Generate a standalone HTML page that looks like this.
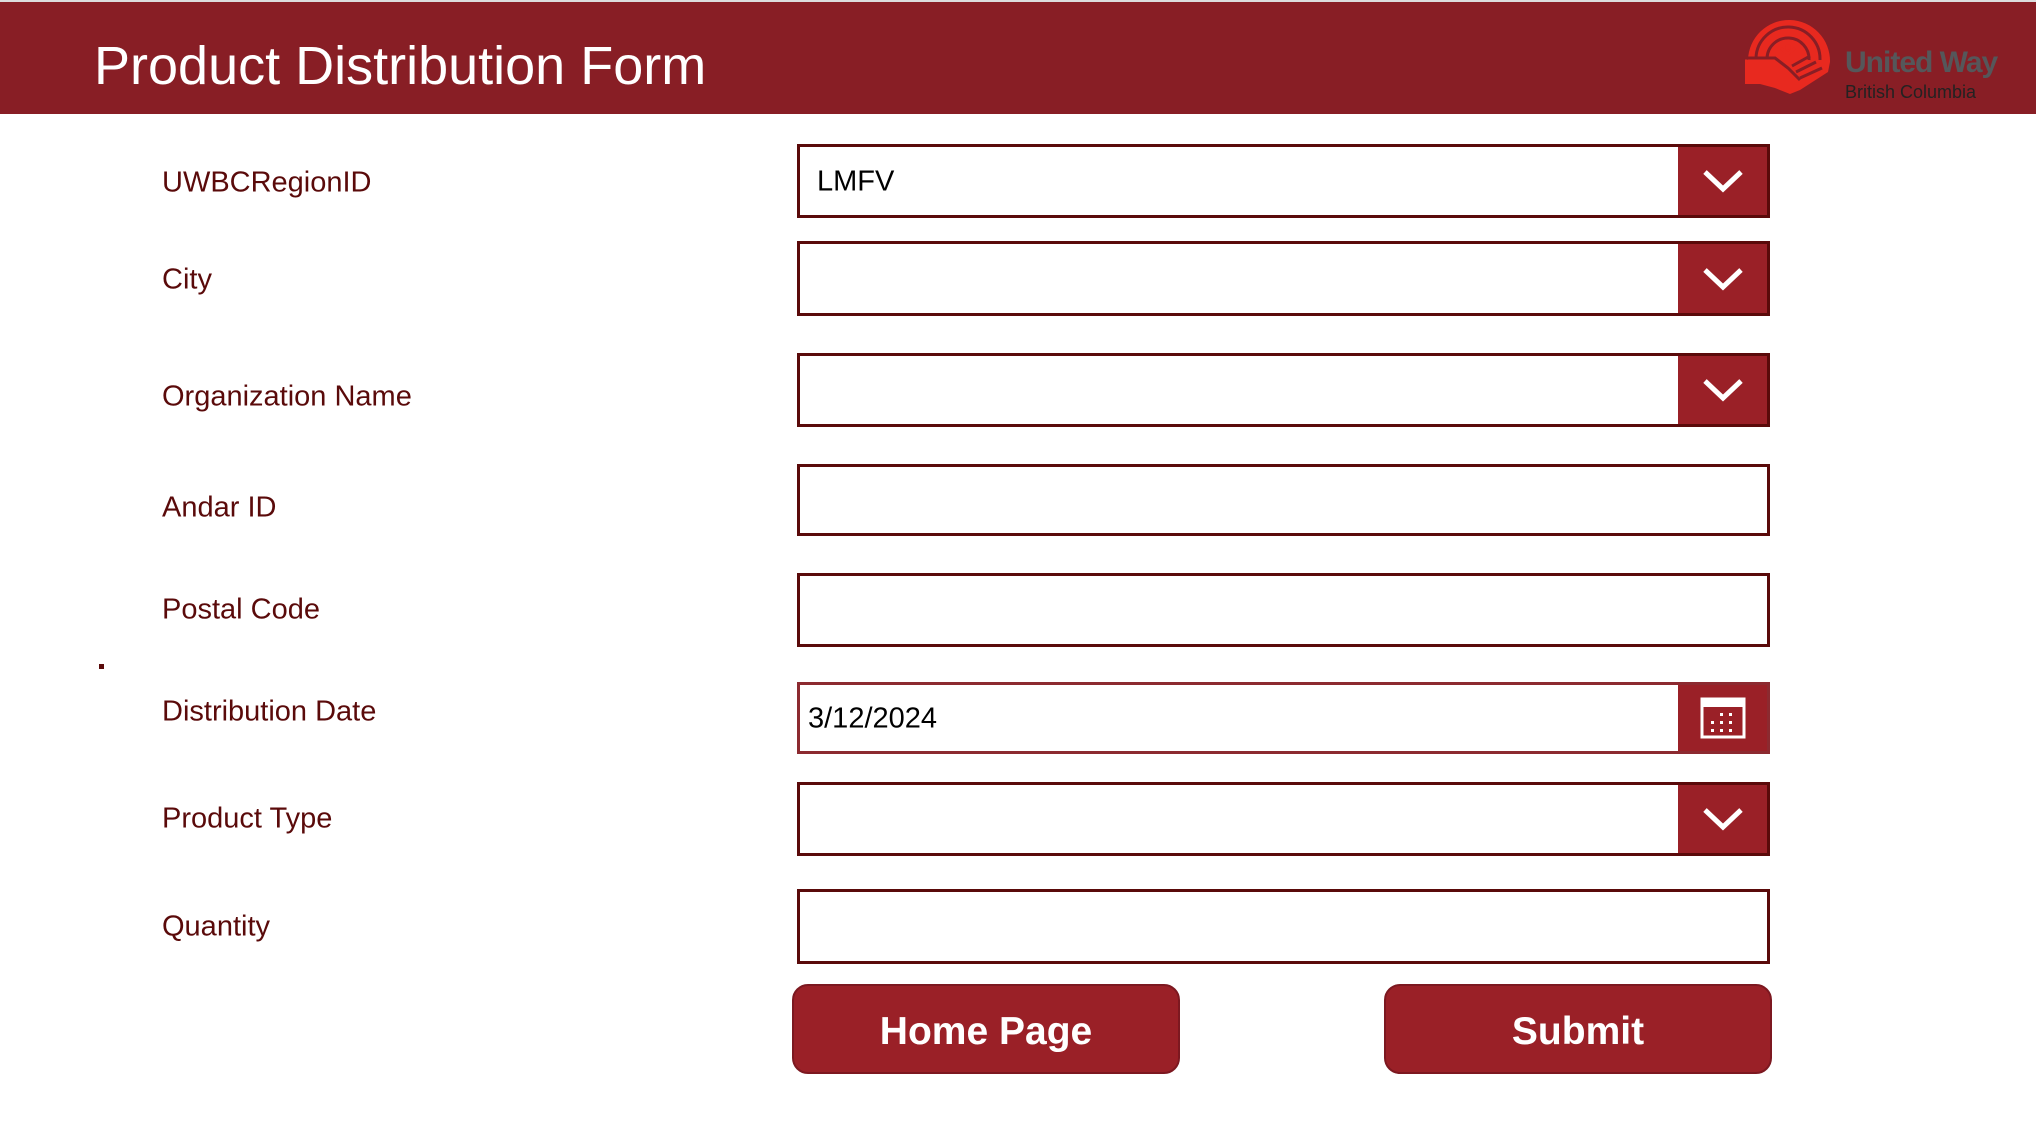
<!DOCTYPE html>
<html><head><meta charset="utf-8"><style>
*{margin:0;padding:0;box-sizing:border-box}
body{width:2036px;height:1146px;background:#fff;position:relative;overflow:hidden;font-family:"Liberation Sans",sans-serif}
.hdr{position:absolute;left:0;top:0;width:2036px;height:114px;background:#881e25;border-top:2px solid #ddd}
.title{position:absolute;left:94px;top:37px;font-size:54px;color:#fff;line-height:1}
.lbl{position:absolute;left:162px;font-size:29px;color:#5a0a0a;line-height:1;transform:translateY(-50%)}
.box{position:absolute;left:797px;width:973px;border:3px solid #5a0a0a;background:#fff}
.btn{position:absolute;right:0;top:0;bottom:0;width:89px;background:#9a2027;display:flex;align-items:center;justify-content:center}
.val{position:absolute;top:52%;transform:translateY(-50%);font-size:29px;color:#000}
.b{position:absolute;top:984px;width:388px;height:90px;background:#9a2027;border:2px solid #7c1820;border-radius:16px;color:#fff;font-size:39px;font-weight:bold;display:flex;align-items:center;justify-content:center;padding-top:6px}
</style></head><body>
<div class="hdr">
<div class="title">Product Distribution Form</div>
<svg style="position:absolute;left:1730px;top:8px" width="110" height="95" viewBox="0 0 110 95">
<g fill="none" stroke="#e8291f" stroke-width="6">
<path d="M22 50 A36 36 0 0 1 94 50"/>
<path d="M32 50 A26 26 0 0 1 84 52"/>
<path d="M42 50 A16 16 0 0 1 74 52"/>
</g>
<path d="M18 50 A40 40 0 0 1 100 52 L98 62 L70 80 L60 84 L45 78 L30 74 L15 74 L15 48 Z" fill="#e8291f"/>
<g fill="none" stroke="#881e25" stroke-width="3">
<path d="M26 48 A32 32 0 0 1 90 50"/>
<path d="M37 48 A21 21 0 0 1 79 50"/>
<path d="M15 48 L45 48 L58 58 L70 70"/>
<path d="M62 56 L80 46 M66 62 L86 52 M70 68 L92 58"/>
</g>
<circle cx="58" cy="37" r="3" fill="#e8291f"/>
<path d="M51 38 L58 44 L65 38 M58 44 L58 52" stroke="#e8291f" stroke-width="3" fill="none"/>
</svg>
<div style="position:absolute;left:1845px;top:46px;font-size:30px;font-weight:bold;color:#55575a;letter-spacing:-1px;line-height:1">United Way</div>
<div style="position:absolute;left:1845px;top:81px;font-size:18px;color:#222;line-height:1">British Columbia</div>
</div>

<div class="lbl" style="top:183px">UWBCRegionID</div>
<div class="lbl" style="top:280px">City</div>
<div class="lbl" style="top:397px">Organization Name</div>
<div class="lbl" style="top:508px">Andar ID</div>
<div class="lbl" style="top:610px">Postal Code</div>
<div class="lbl" style="top:712px">Distribution Date</div>
<div class="lbl" style="top:819px">Product Type</div>
<div class="lbl" style="top:927px">Quantity</div>
<div style="position:absolute;left:99px;top:664px;width:5px;height:5px;background:#5a0a0a"></div>

<div class="box" style="top:144px;height:74px"><div class="val" style="left:17px">LMFV</div><div class="btn"><svg width="44" height="26"><path d="M4 4 L22 21 L40 4" stroke="#fff" stroke-width="5" fill="none"/></svg></div></div>
<div class="box" style="top:241px;height:75px"><div class="btn"><svg width="44" height="26"><path d="M4 4 L22 21 L40 4" stroke="#fff" stroke-width="5" fill="none"/></svg></div></div>
<div class="box" style="top:353px;height:74px"><div class="btn"><svg width="44" height="26"><path d="M4 4 L22 21 L40 4" stroke="#fff" stroke-width="5" fill="none"/></svg></div></div>
<div class="box" style="top:464px;height:72px"></div>
<div class="box" style="top:573px;height:74px"></div>
<div class="box" style="top:682px;height:72px;border-color:#8c2a30"><div class="val" style="left:8px">3/12/2024</div><div class="btn"><svg width="46" height="42" viewBox="0 0 46 42"><rect x="2" y="2" width="42" height="38" fill="none" stroke="#fff" stroke-width="3"/><rect x="2" y="2" width="42" height="8" fill="#fff"/><g fill="#fff"><rect x="11" y="24" width="3" height="3"/><rect x="20" y="24" width="3" height="3"/><rect x="29" y="24" width="3" height="3"/><rect x="11" y="32" width="3" height="3"/><rect x="20" y="32" width="3" height="3"/><rect x="29" y="32" width="3" height="3"/><rect x="29" y="16" width="3" height="3"/><rect x="20" y="16" width="3" height="3"/></g></svg></div></div>
<div class="box" style="top:782px;height:74px"><div class="btn"><svg width="44" height="26"><path d="M4 4 L22 21 L40 4" stroke="#fff" stroke-width="5" fill="none"/></svg></div></div>
<div class="box" style="top:889px;height:75px"></div>

<div class="b" style="left:792px">Home Page</div>
<div class="b" style="left:1384px">Submit</div>
</body></html>
